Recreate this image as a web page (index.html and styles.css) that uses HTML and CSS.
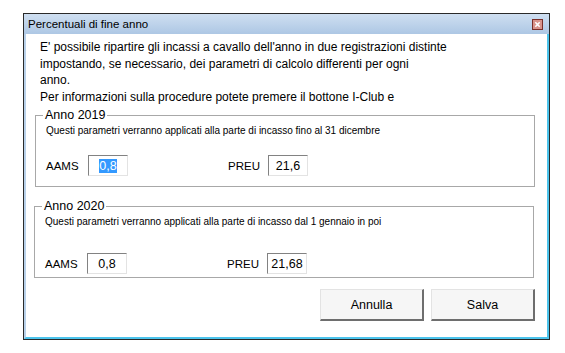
FILE: index.html
```html
<!DOCTYPE html>
<html lang="it">
<head>
  <meta charset="utf-8">
  <title>Percentuali di fine anno</title>
  <link rel="stylesheet" href="styles.css">
</head>
<body>
  <div class="window">
    <div class="titlebar">
      <span class="title">Percentuali di fine anno</span>
      <span class="close" aria-label="Chiudi">
        <svg viewBox="0 0 8 8" aria-hidden="true">
          <path d="M1.5 1.5l5 5M6.5 1.5l-5 5"/>
        </svg>
      </span>
    </div>

    <div class="content">
      <p class="intro">
        E' possibile ripartire gli incassi a cavallo dell'anno in due registrazioni distinte<br>
        impostando, se necessario, dei parametri di calcolo differenti per ogni<br>
        anno.<br>
        Per informazioni sulla procedure potete premere il bottone I-Club e
      </p>

      <fieldset class="group group-first">
        <legend>Anno 2019</legend>
        <p class="group-note">Questi parametri verranno applicati alla parte di incasso fino al 31 dicembre</p>
        <div class="group-row">
          <label class="field">
            <span class="field-label">AAMS</span>
            <span class="field-input"><span class="selected">0,8</span></span>
          </label>
          <label class="field">
            <span class="field-label">PREU</span>
            <span class="field-input">21,6</span>
          </label>
        </div>
      </fieldset>

      <fieldset class="group group-second">
        <legend>Anno 2020</legend>
        <p class="group-note">Questi parametri verranno applicati alla parte di incasso dal 1 gennaio in poi</p>
        <div class="group-row">
          <label class="field">
            <span class="field-label">AAMS</span>
            <span class="field-input">0,8</span>
          </label>
          <label class="field">
            <span class="field-label">PREU</span>
            <span class="field-input">21,68</span>
          </label>
        </div>
      </fieldset>

      <div class="actions">
        <button class="button">Annulla</button>
        <button class="button">Salva</button>
      </div>
    </div>
  </div>
</body>
</html>
```

FILE: styles.css
```css
*, *::before, *::after {
  margin: 0;
  padding: 0;
  box-sizing: border-box;
}

html {
  font-size: 12px;
}

body {
  background-color: #FFFFFF;
  color: #000000;
  font-family: "Liberation Sans", Arial, sans-serif;
  padding: 13px 0 0 23px;
}

.window {
  width: 527px;
  height: 327px;
  display: flex;
  flex-direction: column;
  border: 1px solid #2A2A2A;
  background-color: #FFFFFF;
}

.titlebar {
  height: 20px;
  display: flex;
  align-items: center;
  justify-content: space-between;
  padding: 0 6px 0 4px;
  background: linear-gradient(#CFDFF1, #ADC7E4);
  font-size: 11.5px;
}

.close {
  width: 11px;
  height: 11px;
  display: flex;
  align-items: center;
  justify-content: center;
  border: 1px solid #7A2E28;
  background-color: #D8928A;
}

.close svg {
  width: 7px;
  height: 7px;
  stroke: #FFFFFF;
  stroke-width: 1.8;
}

.content {
  flex: 1;
  display: flex;
  flex-direction: column;
  border-left: 2px solid #B9D1EA;
  border-right: 2px solid #4CC4EC;
  border-bottom: 2px solid #4CC4EC;
  padding: 5px 0 0 14px;
}

.intro {
  height: 69px;
  overflow: hidden;
  white-space: nowrap;
  font-size: 12px;
  line-height: 16.5px;
}

.group {
  width: 500px;
  height: 79px;
  margin-left: -5px;
  border: 1px solid #A8A8A8;
  padding: 0 10px;
}

.group legend {
  height: 14px;
  padding: 0 2px;
  margin-left: -3px;
  font-size: 12.5px;
  line-height: 14px;
}

.group-second {
  margin-top: 12px;
  margin-left: -6px;
}

.group-note {
  font-size: 10px;
  margin-top: 3px;
}

.group-row {
  display: flex;
  margin-top: 19px;
  gap: 100px;
}

.group-second .group-row {
  margin-top: 26px;
}

.field {
  display: flex;
  align-items: center;
  font-size: 11.5px;
}

.field-label {
  width: 42px;
}

.field + .field .field-label {
  width: 40px;
}

.field-input {
  width: 40px;
  height: 21px;
  display: flex;
  align-items: center;
  justify-content: center;
  border: 1px solid #E3E3E3;
  border-top-color: #828282;
  border-left-color: #828282;
  font-size: 12.5px;
}

.selected {
  background-color: #3399FF;
  color: #FFFFFF;
}

.actions {
  display: flex;
  justify-content: flex-end;
  gap: 7px;
  margin-top: 11px;
  padding-right: 12px;
}

.button {
  width: 104px;
  height: 32px;
  border: 1px solid #A0A0A0;
  border-right: 2px solid #6E6E6E;
  border-bottom: 2px solid #6E6E6E;
  border-top-color: #E3E3E3;
  border-left-color: #E3E3E3;
  background-color: #F6F6F6;
  font-family: inherit;
  font-size: 12.5px;
  color: #000000;
}
```
